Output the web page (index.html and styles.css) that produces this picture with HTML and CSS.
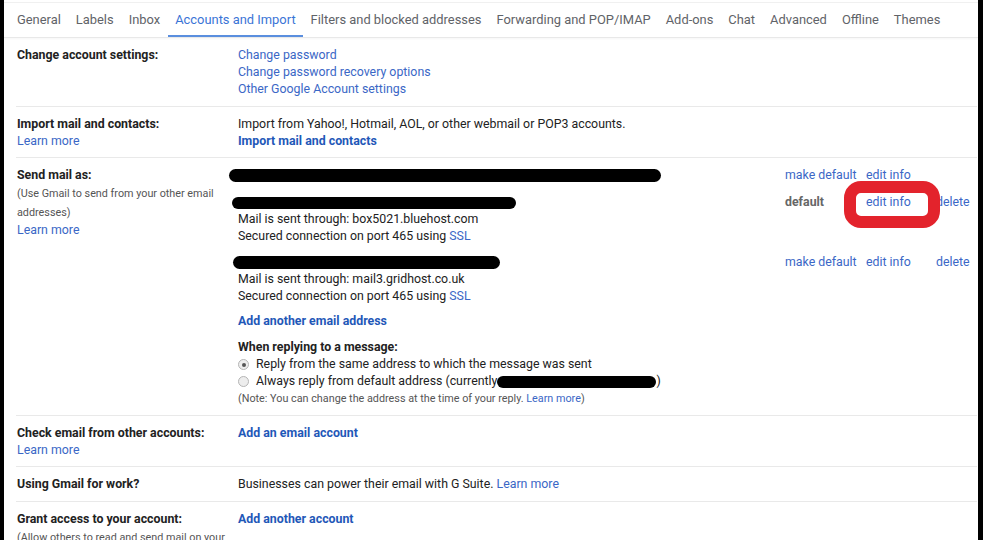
FILE: index.html
```html
<!DOCTYPE html>
<html lang="en">
<head>
  <meta charset="UTF-8">
  <meta name="viewport" content="width=device-width, initial-scale=1.0">
  <title>Settings - Accounts and Import</title>
  <link rel="stylesheet" href="styles.css">
</head>
<body>
  <div class="page">
    <div class="tabs">
      <a class="tab" href="#">General</a>
      <a class="tab" href="#">Labels</a>
      <a class="tab" href="#">Inbox</a>
      <a class="tab active" href="#">Accounts and Import</a>
      <a class="tab" href="#">Filters and blocked addresses</a>
      <a class="tab" href="#">Forwarding and POP/IMAP</a>
      <a class="tab" href="#">Add-ons</a>
      <a class="tab" href="#">Chat</a>
      <a class="tab" href="#">Advanced</a>
      <a class="tab" href="#">Offline</a>
      <a class="tab" href="#">Themes</a>
    </div>

    <div class="settings">
      <div class="row">
        <div class="label"><b>Change account settings:</b></div>
        <div class="value">
          <a href="#">Change password</a><br>
          <a href="#">Change password recovery options</a><br>
          <a href="#">Other Google Account settings</a>
        </div>
      </div>

      <div class="row">
        <div class="label">
          <b>Import mail and contacts:</b><br>
          <a href="#">Learn more</a>
        </div>
        <div class="value">
          Import from Yahoo!, Hotmail, AOL, or other webmail or POP3 accounts.<br>
          <a class="strong" href="#">Import mail and contacts</a>
        </div>
      </div>

      <div class="row">
        <div class="label">
          <b>Send mail as:</b>
          <div class="small tall">(Use Gmail to send from your other email addresses)</div>
          <a href="#">Learn more</a>
        </div>
        <div class="value">
          <div class="addr-block first">
            <div class="addr-row">
              <div class="addr"><span class="redact r1"></span></div>
              <div class="actions">
                <a class="act-md" href="#">make default</a>
                <a class="act-ei" href="#">edit info</a>
                <span class="act-del"></span>
              </div>
            </div>
          </div>

          <div class="addr-block">
            <div class="addr-row">
              <div class="addr"><span class="redact r2"></span></div>
              <div class="actions">
                <span class="act-md is-default">default</span>
                <span class="act-ei"><a href="#">edit info</a><span class="circled"></span></span>
                <a class="act-del" href="#">delete</a>
              </div>
            </div>
            <div>Mail is sent through: box5021.bluehost.com</div>
            <div>Secured connection on port 465 using <a href="#">SSL</a></div>
          </div>

          <div class="addr-block">
            <div class="addr-row">
              <div class="addr"><span class="redact r3"></span></div>
              <div class="actions">
                <a class="act-md" href="#">make default</a>
                <a class="act-ei" href="#">edit info</a>
                <a class="act-del" href="#">delete</a>
              </div>
            </div>
            <div>Mail is sent through: mail3.gridhost.co.uk</div>
            <div>Secured connection on port 465 using <a href="#">SSL</a></div>
          </div>

          <div class="add-link"><a class="strong" href="#">Add another email address</a></div>

          <div class="reply">
            <b>When replying to a message:</b>
            <label class="radio-line"><span class="radio checked"></span>Reply from the same address to which the message was sent</label>
            <label class="radio-line"><span class="radio"></span>Always reply from default address (currently<span class="redact r4"></span>)</label>
            <div class="small">(Note: You can change the address at the time of your reply. <a href="#">Learn more</a>)</div>
          </div>
        </div>
      </div>

      <div class="row">
        <div class="label">
          <b>Check email from other accounts:</b><br>
          <a href="#">Learn more</a>
        </div>
        <div class="value"><a class="strong" href="#">Add an email account</a></div>
      </div>

      <div class="row">
        <div class="label"><b>Using Gmail for work?</b></div>
        <div class="value">Businesses can power their email with G Suite. <a href="#">Learn more</a></div>
      </div>

      <div class="row">
        <div class="label">
          <b>Grant access to your account:</b>
          <div class="small tall">(Allow others to read and send mail on your behalf)</div>
        </div>
        <div class="value"><a class="strong" href="#">Add another account</a></div>
      </div>
    </div>
  </div>
</body>
</html>
```

FILE: styles.css
```css
* {
  margin: 0;
  padding: 0;
  box-sizing: border-box;
}

body {
  background: #000;
  font-family: Roboto, Arial, sans-serif;
  font-size: 12.35px;
  line-height: 17px;
  color: #222;
}

.page {
  background: #fff;
  margin: 0 5px 0 4px;
  height: 540px;
  overflow: hidden;
  padding-top: 2px;
}

a {
  color: #3b67c6;
  text-decoration: none;
}

a.strong {
  color: #1f58b8;
  font-weight: bold;
}

b {
  font-weight: bold;
  color: #222;
}

/* tabs */
.tabs {
  display: flex;
  padding-left: 5.5px;
  border-top: 1px solid #f0f0f0;
  border-bottom: 1px solid #e8e8e8;
  box-shadow: 0 1px 2px rgba(0, 0, 0, 0.04);
}

.tab {
  font-size: 12.9px;
  color: #5f6368;
  padding: 2px 7.5px 0;
  height: 34px;
  line-height: 30px;
  border-bottom: 2px solid transparent;
  white-space: nowrap;
}

.tab.active {
  color: #3a74d6;
  border-bottom-color: #5a8ede;
}

/* rows */
.settings {
  margin-left: 12px;
  margin-right: 1px;
}

.row {
  display: flex;
  padding: 9px 0 7.5px;
  border-bottom: 1px solid #e9e9e9;
}

.label {
  width: 222px;
  padding-left: 1px;
  padding-right: 12px;
  flex-shrink: 0;
}

.value {
  flex: 1;
}

.small {
  font-size: 10.8px;
  color: #555;
}

.small.tall {
  line-height: 19px;
}

/* send mail as */
.addr-block {
  margin-bottom: 9px;
}

.addr-block.first {
  margin-bottom: 10px;
}

.addr-row {
  display: flex;
  align-items: center;
  height: 17px;
}

.addr {
  flex: 1;
}

.actions {
  display: flex;
  width: 192px;
}

.act-md {
  width: 81px;
}

.act-ei {
  width: 70px;
  position: relative;
}

.is-default {
  color: #666;
  font-weight: bold;
}

.circled {
  position: absolute;
  left: -22px;
  top: -13px;
  width: 96px;
  height: 47px;
  border: 12px solid #e3232c;
  border-radius: 17px;
}

.redact {
  display: inline-block;
  background: #000;
  height: 13px;
  border-radius: 7px;
  vertical-align: middle;
}

.r1 {
  width: 432px;
  margin-left: -9px;
}

.r2 {
  width: 284px;
  height: 12px;
  margin-left: -6px;
}

.r3 {
  width: 267px;
  margin-left: -5px;
}

.r4 {
  width: 159px;
  height: 12px;
  margin-left: 0;
}

.add-link {
  margin-top: -1px;
  margin-bottom: 9px;
}

.reply b {
  display: block;
}

.radio-line {
  display: flex;
  align-items: center;
}

.radio {
  display: inline-block;
  width: 11px;
  height: 11px;
  border: 1px solid #b5b5b5;
  border-radius: 50%;
  background: #ededed;
  margin-right: 7px;
  position: relative;
}

.radio.checked::after {
  content: "";
  position: absolute;
  left: 2.5px;
  top: 2.5px;
  width: 4px;
  height: 4px;
  border-radius: 50%;
  background: #555;
}
```
